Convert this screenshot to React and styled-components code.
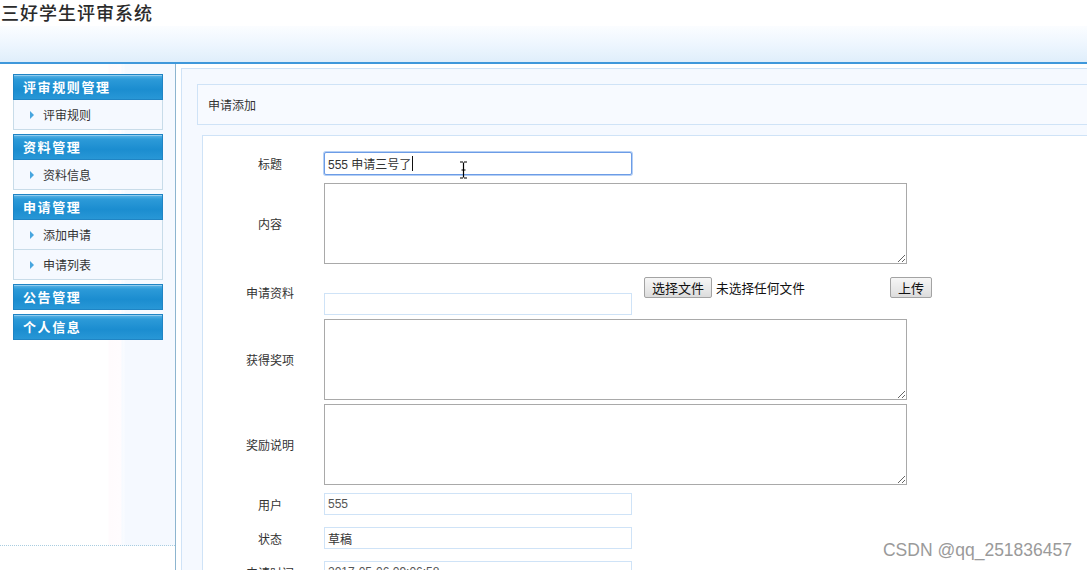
import styled, { createGlobalStyle } from "styled-components";

const GlobalStyle = createGlobalStyle`
  html, body {
    margin: 0;
    padding: 0;
    background: #ffffff;
    overflow: hidden;
  }
  body {
    width: 1087px;
    height: 570px;
    font-family: "Liberation Sans", "Noto Sans CJK SC", sans-serif;
    font-size: 12px;
    color: #333;
  }
`;

const menus = [
  { title: "评审规则管理", items: ["评审规则"] },
  { title: "资料管理", items: ["资料信息"] },
  { title: "申请管理", items: ["添加申请", "申请列表"] },
  { title: "公告管理", items: [] },
  { title: "个人信息", items: [] },
];

const App = () => {
  return (
    <Page>
      <GlobalStyle />
      <SiteTitle>三好学生评审系统</SiteTitle>
      <Banner />
      <Main>
        <Sidebar>
          <SideInner>
            {menus.map((m) => (
              <MenuGroup key={m.title}>
                <MenuHead>{m.title}</MenuHead>
                {m.items.map((it) => (
                  <MenuItem key={it}>
                    <Arrow />
                    {it}
                  </MenuItem>
                ))}
              </MenuGroup>
            ))}
          </SideInner>
        </Sidebar>
        <Content>
          <Outer>
            <PanelTitle>申请添加</PanelTitle>
            <FormBox>
              <Row $gap={16}>
                <Label>标题</Label>
                <Field>
                  <CaretWrap>
                    <TextInput $focus defaultValue="555 申请三号了" />
                    <Caret />
                  </CaretWrap>
                </Field>
              </Row>
              <Row $gap={8}>
                <Label>内容</Label>
                <Field>
                  <TextArea />
                </Field>
              </Row>
              <Row $gap={13}>
                <Label $raise={8}>申请资料</Label>
                <FileField>
                  <TextInput $pale $top={16} />
                  <FilePicker>
                    <Button>选择文件</Button>
                    <FileName>未选择任何文件</FileName>
                  </FilePicker>
                  <Button>上传</Button>
                </FileField>
              </Row>
              <Row $gap={4}>
                <Label>获得奖项</Label>
                <Field>
                  <TextArea />
                </Field>
              </Row>
              <Row $gap={4}>
                <Label>奖励说明</Label>
                <Field>
                  <TextArea />
                </Field>
              </Row>
              <Row $gap={8}>
                <Label>用户</Label>
                <Field>
                  <TextInput $pale $muted defaultValue="555" />
                </Field>
              </Row>
              <Row $gap={12}>
                <Label>状态</Label>
                <Field>
                  <TextInput $pale defaultValue="草稿" />
                </Field>
              </Row>
              <Row $gap={12}>
                <Label>申请时间</Label>
                <Field>
                  <TextInput $pale $muted defaultValue="2017-05-06 09:06:58" />
                </Field>
              </Row>
            </FormBox>
          </Outer>
        </Content>
      </Main>
      <Cursor viewBox="0 0 9 18" width="9" height="18">
        <path d="M1 1h3M5 1h3M4.5 1.5v15M1 17h3M5 17h3M2.5 9h4" stroke="#000" strokeWidth="1.2" fill="none" />
      </Cursor>
      <Watermark>CSDN @qq_251836457</Watermark>
    </Page>
  );
};

//Styled-Components

const Page = styled.div`
  position: relative;
  width: 1087px;
  height: 570px;
  overflow: hidden;
`;

const SiteTitle = styled.div`
  height: 26px;
  line-height: 24px;
  font-family: "Noto Sans CJK SC", sans-serif;
  font-size: 18px;
  font-weight: 500;
  letter-spacing: 1px;
  color: #2b2b2b;
  padding-left: 1px;
`;

const Banner = styled.div`
  height: 36px;
  background: linear-gradient(180deg, #fbfdff 0%, #eef6fe 50%, #dfeefb 100%);
  border-bottom: 2px solid #3f98db;
`;

const Main = styled.div`
  display: flex;
  height: 506px;
`;

const Sidebar = styled.div`
  width: 175px;
  flex: 0 0 175px;
  border-right: 1px solid #8db5cf;
`;

const SideInner = styled.div`
  height: 482px;
  padding: 10px 0 0 13px;
  box-sizing: border-box;
  border-bottom: 1px dotted #a9cde0;
  background: linear-gradient(
    90deg,
    #ffffff 0,
    #ffffff 108px,
    #fffbfd 109px,
    #fffcfe 121px,
    #f6faff 122px,
    #fafcff 124px,
    #f5f9ff 125px
  );
`;

const MenuGroup = styled.div`
  width: 150px;
  margin-bottom: 4px;
`;

const MenuHead = styled.div`
  height: 24px;
  line-height: 24px;
  padding-left: 9px;
  border: 1px solid #1f84c4;
  background: linear-gradient(180deg, #5ab3e6 0%, #2c9ad8 18%, #1b8dd0 60%, #2897d6 100%);
  box-shadow: inset 0 1px 0 rgba(255, 255, 255, 0.35);
  color: #ffffff;
  font-family: "Noto Sans CJK SC", sans-serif;
  font-size: 13px;
  font-weight: 700;
  letter-spacing: 1.6px;
`;

const MenuItem = styled.div`
  display: flex;
  align-items: center;
  height: 29px;
  padding-left: 16px;
  border: 1px solid #c8dce9;
  border-top: none;
  background: #f5f9ff;
  font-family: "Noto Sans CJK SC", sans-serif;
  font-size: 12px;
  color: #333;
`;

const Arrow = styled.span`
  width: 0;
  height: 0;
  margin-right: 9px;
  border-top: 4px solid transparent;
  border-bottom: 4px solid transparent;
  border-left: 4px solid #47a6df;
`;

const Content = styled.div`
  flex: 1;
  padding: 4px 0 0 5px;
  min-width: 0;
`;

const Outer = styled.div`
  width: 1000px;
  height: 600px;
  padding: 15px;
  box-sizing: border-box;
  border: 1px solid #cfe3f7;
  background: #f5f9ff;
`;

const PanelTitle = styled.div`
  height: 39px;
  line-height: 39px;
  padding-left: 10px;
  border: 1px solid #cfe3f7;
  background: #f7faff;
  font-family: "Noto Sans CJK SC", sans-serif;
  font-size: 12px;
  color: #333;
`;

const FormBox = styled.div`
  margin: 10px 0 0 5px;
  height: 600px;
  border: 1px solid #cfe3f7;
  background: #ffffff;
`;

const Row = styled.div`
  display: flex;
  align-items: center;
  margin-top: ${({ $gap }) => $gap}px;
`;

const Label = styled.div`
  width: 121px;
  flex: 0 0 121px;
  padding-left: 13px;
  box-sizing: border-box;
  text-align: center;
  margin-top: ${({ $raise }) => ($raise ? -$raise : 0)}px;
  font-family: "Noto Sans CJK SC", sans-serif;
  font-size: 12px;
  color: #333;
`;

const Field = styled.div`
  display: flex;
`;

const CaretWrap = styled.div`
  position: relative;
`;

const TextInput = styled.input`
  width: 308px;
  height: ${({ $pale }) => ($pale ? 22 : 23)}px;
  margin-top: ${({ $top }) => $top || 0}px;
  padding: 0 3px;
  box-sizing: border-box;
  border: 1px solid ${({ $focus }) => ($focus ? "#6c9ce6" : "#cfe3f7")};
  border-radius: ${({ $focus }) => ($focus ? "2px" : "0")};
  box-shadow: ${({ $focus }) => ($focus ? "0 0 0 1px #b4cff5" : "none")};
  outline: none;
  background: #ffffff;
  font-family: "Liberation Sans", "Noto Sans CJK SC", sans-serif;
  font-size: 12px;
  color: ${({ $muted }) => ($muted ? "#555" : "#333")};
`;

const Caret = styled.span`
  position: absolute;
  left: 88px;
  top: 4px;
  width: 1px;
  height: 15px;
  background: #111;
`;

const TextArea = styled.textarea`
  width: 583px;
  height: 81px;
  box-sizing: border-box;
  border: 1px solid #a9a9a9;
  padding: 2px;
  margin: 0;
  display: block;
  resize: both;
  font-family: "Liberation Sans", sans-serif;
`;

const FileField = styled.div`
  display: flex;
  align-items: flex-start;
`;

const FilePicker = styled.div`
  display: flex;
  align-items: center;
  width: 240px;
  margin-left: 12px;
  margin-right: 6px;
`;

const Button = styled.button`
  height: 21px;
  padding: 0 7px;
  border: 1px solid #a3a3a3;
  border-radius: 2px;
  background: linear-gradient(180deg, #f6f6f6 0%, #e8e8e8 60%, #dcdcdc 100%);
  font-family: "Noto Sans CJK SC", sans-serif;
  font-size: 13px;
  color: #111;
  line-height: 19px;
`;

const FileName = styled.span`
  margin-left: 4px;
  font-family: "Noto Sans CJK SC", sans-serif;
  font-size: 12.7px;
  color: #111;
`;

const Cursor = styled.svg`
  position: absolute;
  left: 459px;
  top: 161px;
`;

const Watermark = styled.div`
  position: absolute;
  right: 15px;
  top: 540px;
  font-family: "Liberation Sans", sans-serif;
  font-size: 17.5px;
  color: #9a9a9a;
`;

export default App;
